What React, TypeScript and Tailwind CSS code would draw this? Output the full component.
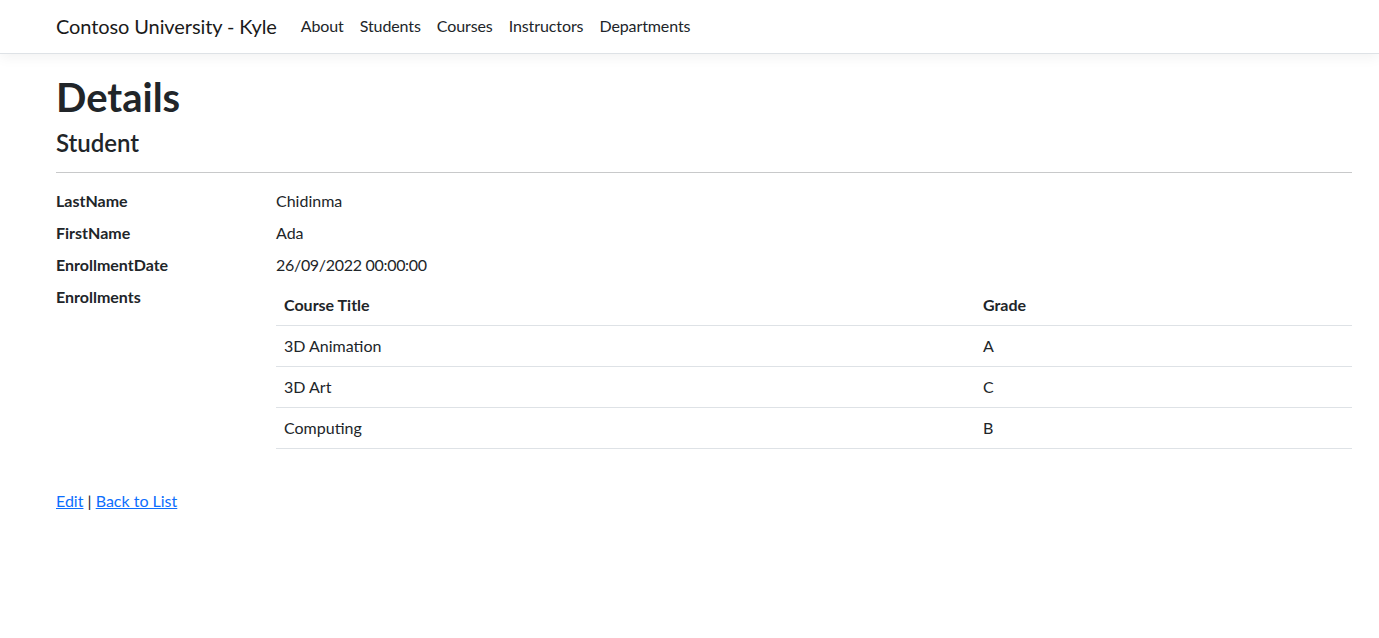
import React from "react";

export default function App() {
  const rows = [
    ["3D Animation", "A"],
    ["3D Art", "C"],
    ["Computing", "B"],
  ];
  return (
    <div className="min-h-[638px] bg-white text-[#212529] font-['Lato','Noto_Sans',sans-serif]">
      <header className="h-[54px] border-b border-[#dee2e6] bg-white shadow-[0_4px_12px_rgba(0,0,0,0.05)]">
        <div className="flex h-[53px] items-center pb-[2px] pl-14 pr-[27px]">
          <a className="mr-4 text-[20px] leading-[30px] tracking-[-0.1px] text-[#1a1a1a]">Contoso University - Kyle</a>
          <nav className="flex">
            {["About", "Students", "Courses", "Instructors", "Departments"].map((l) => (
              <a key={l} className="px-2 text-[16px] leading-6 tracking-[-0.1px] text-[#212529]">
                {l}
              </a>
            ))}
          </nav>
        </div>
      </header>
      <main className="pl-14 pr-[27px] pt-[19px]">
        <h1 className="mb-[7px] text-[40px] font-bold leading-[48px]">Details</h1>
        <h4 className="text-[24px] font-semibold leading-[29px]">Student</h4>
        <hr className="mt-[15px] mb-4 border-0 border-t border-[#c8c9ca]" />
        <dl className="mb-4 grid grid-cols-[220px_1fr] text-[16px] leading-6">
          <dt className="mb-2 font-bold">LastName</dt>
          <dd className="mb-2">Chidinma</dd>
          <dt className="mb-2 font-bold">FirstName</dt>
          <dd className="mb-2">Ada</dd>
          <dt className="mb-2 font-bold">EnrollmentDate</dt>
          <dd className="mb-2 tracking-[-0.3px]">26/09/2022 00:00:00</dd>
          <dt className="mb-2 font-bold">Enrollments</dt>
          <dd className="mb-2">
            <table className="mb-4 w-full border-collapse text-left">
              <thead>
                <tr className="border-b border-[#dee2e6]">
                  <th className="w-[699px] px-2 py-2 font-bold">Course Title</th>
                  <th className="px-2 py-2 font-bold">Grade</th>
                </tr>
              </thead>
              <tbody>
                {rows.map(([c, g]) => (
                  <tr key={c} className="border-b border-[#dee2e6]">
                    <td className="px-2 py-2">{c}</td>
                    <td className="px-2 py-2">{g}</td>
                  </tr>
                ))}
              </tbody>
            </table>
          </dd>
        </dl>
        <div className="text-[16px] leading-6">
          <a href="#" className="text-[#0d6efd] underline">Edit</a> |{" "}
          <a href="#" className="text-[#0d6efd] underline">Back to List</a>
        </div>
      </main>
    </div>
  );
}
